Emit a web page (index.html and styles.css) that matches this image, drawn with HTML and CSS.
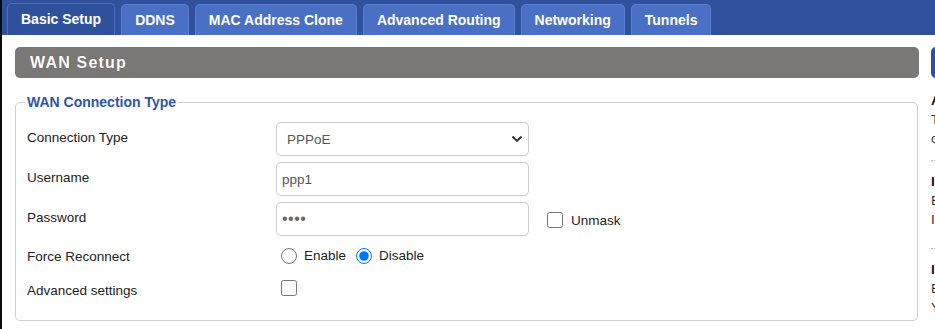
FILE: index.html
```html
<!DOCTYPE html>
<html lang="en">
<head>
  <meta charset="UTF-8">
  <title>Basic Setup</title>
  <link rel="stylesheet" href="styles.css">
</head>
<body>
  <div class="page">
    <ul class="tabs">
      <li class="tab active">Basic Setup</li>
      <li class="tab">DDNS</li>
      <li class="tab">MAC Address Clone</li>
      <li class="tab">Advanced Routing</li>
      <li class="tab">Networking</li>
      <li class="tab">Tunnels</li>
    </ul>

    <div class="content">
      <div class="main">
        <h2 class="section-head">WAN Setup</h2>

        <fieldset class="box">
          <legend>WAN Connection Type</legend>

          <div class="row">
            <label class="label">Connection Type</label>
            <div class="select-wrap">
              <select class="field select">
                <option>PPPoE</option>
              </select>
              <svg class="chevron" width="12" height="8" viewBox="0 0 12 8">
                <path d="M1.5 1.5 L6 6 L10.5 1.5" fill="none" stroke="#333" stroke-width="1.8"/>
              </svg>
            </div>
          </div>

          <div class="row">
            <label class="label">Username</label>
            <input class="field" type="text" value="ppp1">
          </div>

          <div class="row">
            <label class="label">Password</label>
            <input class="field pass" type="password" value="pppp">
            <label class="check-label"><input class="check" type="checkbox"> Unmask</label>
          </div>

          <div class="row short">
            <label class="label">Force Reconnect</label>
            <label class="radio-label"><input class="radio" type="radio" name="fr"> Enable</label>
            <label class="radio-label"><input class="radio" type="radio" name="fr" checked> Disable</label>
          </div>

          <div class="row short">
            <label class="label">Advanced settings</label>
            <input class="check" type="checkbox">
          </div>
        </fieldset>
      </div>

      <div class="help">
        <div class="help-head">Help</div>
        <div class="help-item">
          <b>Auto</b>
          <p>This</p>
          <p>cable</p>
        </div>
        <div class="help-item tall">
          <b>Internet MTU</b>
          <p>Enter</p>
          <p>In</p>
        </div>
        <div class="help-item">
          <b>IPv6</b>
          <p>Enable</p>
          <p>You</p>
        </div>
      </div>
    </div>
  </div>
</body>
</html>
```

FILE: styles.css
```css
html, body {
  margin: 0;
  height: 100%;
  overflow: hidden;
}
body {
  font-family: "Liberation Sans", Arial, sans-serif;
  font-size: 13.5px;
  color: #222;
  background: #fff;
}
.page {
  border-left: 2px solid #0b0b0b;
  min-height: 100%;
  box-sizing: border-box;
}
.tabs {
  list-style: none;
  margin: 0;
  padding: 0 0 0 5px;
  height: 35px;
  background: #30529c;
  display: flex;
  align-items: flex-end;
  gap: 6px;
}
.tab {
  height: 31px;
  line-height: 31px;
  padding: 0 13px;
  background: #4a70c6;
  color: #fff;
  font-weight: bold;
  font-size: 14px;
  border: 1px solid #5a7fd0;
  border-bottom: none;
  border-radius: 5px 5px 0 0;
  box-sizing: border-box;
}
.tab.active {
  height: 32px;
  line-height: 31px;
  background: #2f519b;
  border-color: #4d6fbd;
}
.content {
  display: flex;
  gap: 12px;
  padding: 12px 0 0 13px;
}
.main {
  width: 904px;
  flex-shrink: 0;
}
.section-head {
  margin: 0;
  height: 31px;
  line-height: 31px;
  background: #797876;
  color: #fff;
  font-size: 16px;
  letter-spacing: 1.2px;
  padding-left: 15px;
  border-radius: 5px;
  text-shadow: 0 0 1px rgba(0,0,0,0.3);
}
.box {
  margin: 16px 1px 0 0;
  padding: 12px 10px 19px 11px;
  border: 1px solid #cfcfcf;
  border-radius: 5px;
}
.box legend {
  color: #2f55a4;
  font-weight: bold;
  font-size: 14px;
  padding: 0 2px;
  margin-left: -2px;
}
.row {
  display: flex;
  align-items: center;
  min-height: 34px;
  margin-bottom: 6px;
}
.row.short {
  min-height: 27px;
  margin-bottom: 5px;
}
.row.short:last-child {
  margin-bottom: 0;
}
.label {
  width: 249px;
  flex-shrink: 0;
  padding-bottom: 4px;
}
.row.short .label {
  padding-bottom: 0;
  padding-top: 2px;
}
.row.short:last-child .label {
  padding-top: 6px;
}
.field {
  width: 253px;
  height: 34px;
  box-sizing: border-box;
  border: 1px solid #ccc;
  border-radius: 5px;
  padding: 0 5px;
  font-family: "Liberation Sans", Arial, sans-serif;
  font-size: 13.5px;
  color: #555;
  background: #fff;
  outline: none;
}
.pass {
  font-size: 16px;
  letter-spacing: 0.5px;
  color: #666;
}
.select-wrap {
  position: relative;
}
.select {
  appearance: none;
  padding-left: 10px;
}
.chevron {
  position: absolute;
  right: 6px;
  top: 13px;
}
.check, .radio {
  width: 16px;
  height: 16px;
  margin: 0;
  accent-color: #0075ff;
}
.check-label {
  display: flex;
  align-items: center;
  gap: 8px;
  margin-left: 18px;
  margin-top: 2px;
}
.radio-label {
  display: flex;
  align-items: center;
  gap: 7px;
  margin-left: 5px;
  margin-right: 5px;
}
.row .check {
  margin-left: 5px;
}
.check-label .check {
  margin-left: 0;
}
.help {
  width: 220px;
  flex-shrink: 0;
}
.help-head {
  height: 31px;
  line-height: 31px;
  background: #30529c;
  color: #fff;
  font-weight: bold;
  padding-left: 10px;
  border-radius: 5px;
  margin-bottom: 14px;
}
.help-item {
  border-bottom: 1px dotted #bbb;
  padding-bottom: 12px;
  margin-bottom: 12px;
}
.help-item.tall {
  padding-bottom: 19px;
}
.help-item b {
  display: block;
  color: #111;
  line-height: 18px;
}
.help-item p {
  margin: 0;
  line-height: 19px;
  color: #333;
}
```
